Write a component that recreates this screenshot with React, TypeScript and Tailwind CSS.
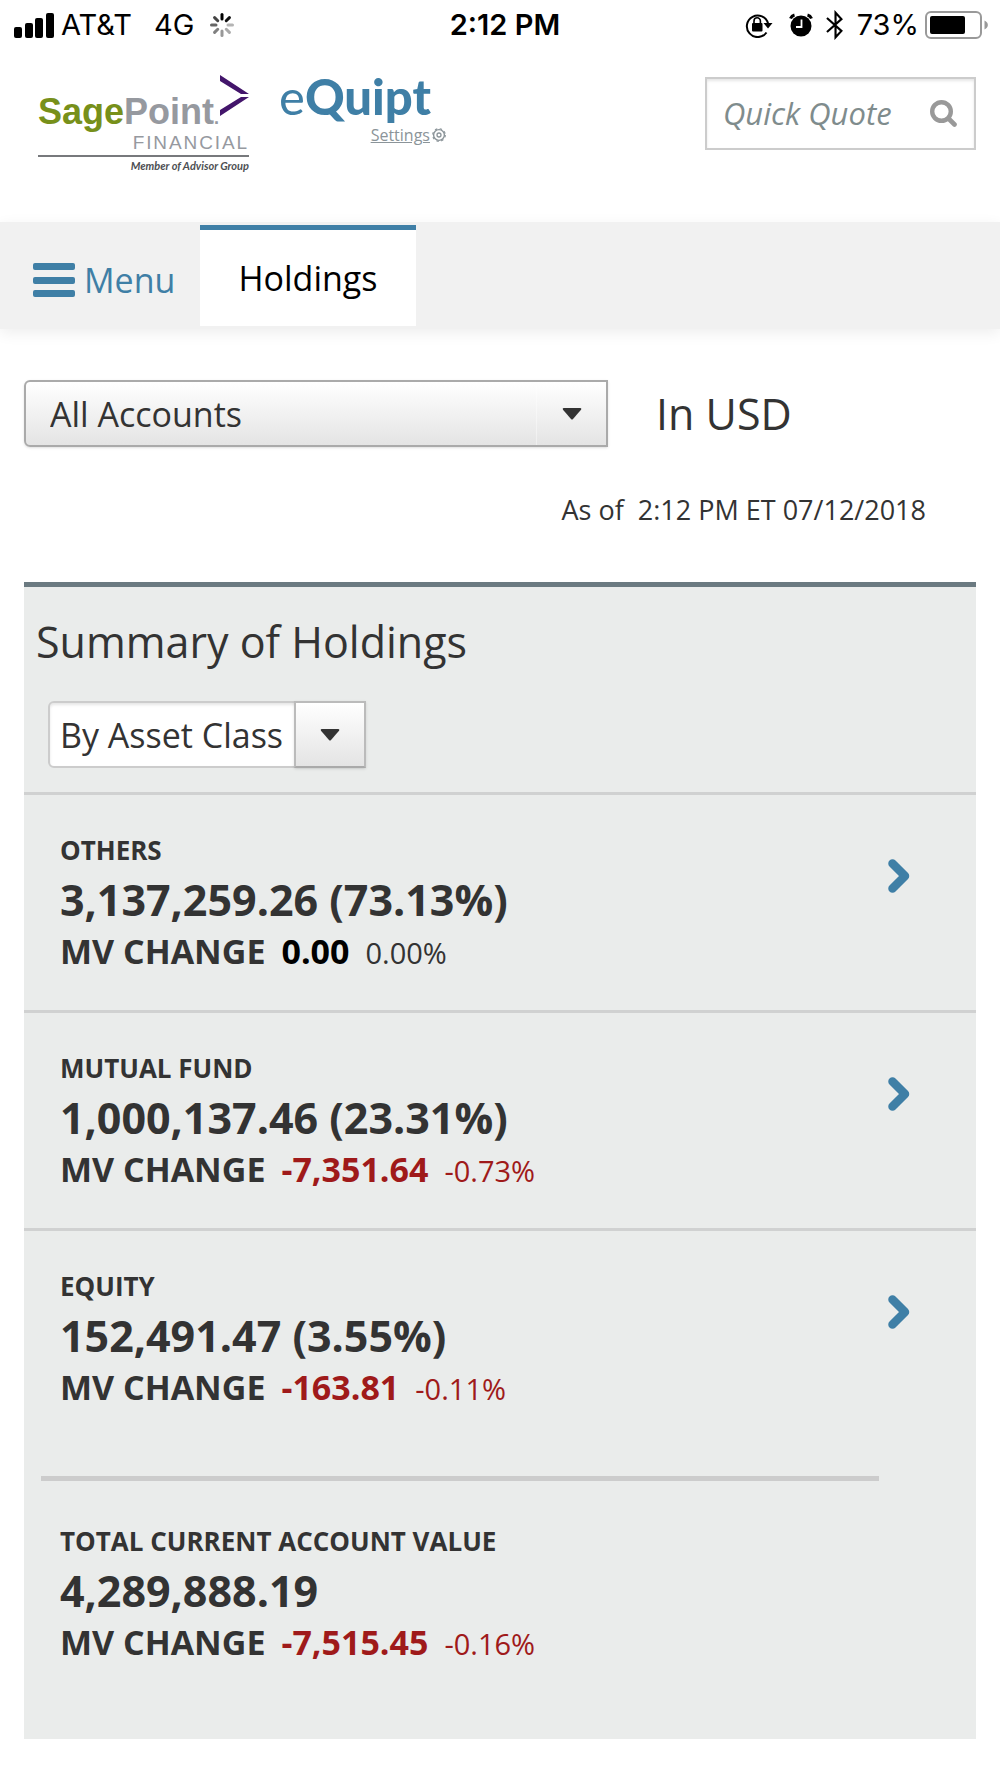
import React, { useState } from "react";

const ASSET_CLASSES = [
  { name: "Others", value: "3,137,259.26 (73.13%)", change: "0.00", percent: "0.00%" },
  { name: "Mutual Fund", value: "1,000,137.46 (23.31%)", change: "-7,351.64", percent: "-0.73%" },
  { name: "Equity", value: "152,491.47 (3.55%)", change: "-163.81", percent: "-0.11%" },
];

const SPINNER_SHADES = ["#000", "#111", "#b4b4b4", "#aaa", "#989898", "#808080", "#666", "#444"];

function StatusBar() {
  return (
    <div className="grid grid-cols-[1fr_auto_1fr] items-center h-[50px] pl-[14px] pr-[12px] font-['Inter',sans-serif] text-[29px] leading-[36px] text-black">
      <div className="flex items-center">
        <svg width="40" height="25" viewBox="0 0 40 25" aria-hidden="true">
          <rect x="0" y="14" width="8" height="11" rx="2" />
          <rect x="11" y="10" width="8" height="15" rx="2" />
          <rect x="21" y="5" width="8" height="20" rx="2" />
          <rect x="32" y="0" width="8" height="25" rx="2" />
        </svg>
        <span className="ml-[7px]">AT&amp;T</span>
        <span className="ml-[22px]">4G</span>
        <svg className="ml-4" width="24" height="24" viewBox="0 0 24 24" aria-hidden="true">
          {SPINNER_SHADES.map((shade, i) => (
            <line
              key={shade}
              x1="12"
              y1="1.5"
              x2="12"
              y2="6"
              stroke={shade}
              strokeWidth="3"
              strokeLinecap="round"
              transform={`rotate(${i * 45} 12 12)`}
            />
          ))}
        </svg>
      </div>
      <span className="pl-2 font-semibold">2:12 PM</span>
      <div className="flex items-center justify-end">
        <svg width="28" height="26" viewBox="0 0 28 26" aria-hidden="true">
          <path d="M21.5 20.5a10.8 10.8 0 1 1 1.6-9" fill="none" stroke="#000" strokeWidth="2" />
          <path d="M18.5 11h9l-4.5 5.5z" />
          <rect x="7" y="11" width="10.5" height="8.5" rx="1" />
          <path d="M9 11.500V9a3.200 3.200 0 0 1 6.400 0v2.500" fill="none" stroke="#000" strokeWidth="1.6" />
        </svg>
        <svg className="ml-4" width="24" height="24" viewBox="0 0 24 24" aria-hidden="true">
          <circle cx="12" cy="13" r="10.500" />
          <path d="M1.500 5.500a6 6 0 0 1 4-3.500M22.500 5.500a6 6 0 0 0-4-3.500" fill="none" stroke="#000" strokeWidth="3" />
          <path d="M12.500 6.500v7.500H7" fill="none" stroke="#fff" strokeWidth="1.800" />
        </svg>
        <svg className="ml-3" width="20" height="30" viewBox="0 0 18 28" aria-hidden="true">
          <path d="M1.500 7.500 15 19.500 9.500 25.500V2.500L15 8.500 1.500 20.500" fill="none" stroke="#000" strokeWidth="2" />
        </svg>
        <span className="ml-3">73%</span>
        <svg className="ml-[6px]" width="63" height="28" viewBox="0 0 63 28" aria-hidden="true">
          <rect x="1" y="1" width="55" height="26" rx="5" fill="#fff" stroke="#999" strokeWidth="2" />
          <rect x="5" y="5" width="35" height="18" rx="2" />
          <path d="M59.500 9.500c4.500 2 4.500 7 0 9z" fill="#999" />
        </svg>
      </div>
    </div>
  );
}

function SagePointLogo() {
  return (
    <div className="w-[211px] font-['Liberation_Sans',sans-serif]">
      <div className="flex">
        <span className="pt-[17px] text-[36px] leading-[40px] font-bold text-[#96999f]">
          <span className="text-[#77901a]">Sage</span>Point<span className="text-[18px] leading-none">.</span>
        </span>
        <svg className="ml-auto shrink-0" width="29" height="42" viewBox="0 0 29 42" aria-hidden="true">
          <path d="M0 0v6l21 13h8zM29 22h-8L0 35v6z" fill="#43156b" />
        </svg>
      </div>
      <div className="border-b-2 border-[#77797c] pt-[2px] pb-[3px] text-right text-[19px] leading-[18px] tracking-widest text-[#96999f]">
        FINANCIAL
      </div>
      <div className="pt-[2px] text-right font-['Lato',sans-serif] text-[11px] leading-[14px] font-bold italic text-[#4d4f53]">
        Member of Advisor Group
      </div>
    </div>
  );
}

function Header() {
  return (
    <header className="flex items-start justify-between h-[172px] pt-[25px] pl-[38px] pr-6">
      <div className="flex">
        <SagePointLogo />
        <div className="ml-[30px]">
          <div className="font-['Lato',sans-serif] text-[49px] leading-[42px] font-black text-[#3f7fa6]">
            <span className="font-normal">e</span>Quipt
          </div>
          <a href="#settings" className="flex items-center justify-end gap-[2px] pt-2 -mr-[15px] text-[16px] leading-[20px] text-[#8b9499]">
            <span className="underline">Settings</span>
            <svg width="14" height="14" viewBox="0 0 14 14" fill="none" stroke="#8b9499" aria-hidden="true">
              <circle cx="7" cy="7" r="5.400" strokeWidth="1.400" />
              <circle cx="7" cy="7" r="6.300" strokeWidth="1.200" strokeDasharray="2.400 2.548" />
              <circle cx="7" cy="7" r="2" strokeWidth="1.300" />
            </svg>
          </a>
        </div>
      </div>
      <form className="flex items-center w-[271px] h-[73px] mt-[2px] pl-4 pr-[17px] border-2 border-[#ccc] bg-white shadow-[inset_0_2px_3px_#0000001a]">
        <input
          type="text"
          aria-label="Quick Quote"
          placeholder="Quick Quote"
          className="min-w-0 flex-1 pb-[2px] text-[31px] leading-[40px] italic outline-none placeholder:text-[#7f8c8d]"
        />
        <button type="button" aria-label="Search">
          <svg width="27" height="27" viewBox="0 0 27 27" fill="none" stroke="#999" aria-hidden="true">
            <circle cx="11.500" cy="11.500" r="9.300" strokeWidth="4.400" />
            <path d="m18.500 18.500 6 6" strokeWidth="4.600" strokeLinecap="round" />
          </svg>
        </button>
      </form>
    </header>
  );
}

function Navigation() {
  return (
    <nav className="flex h-[107px] pt-[3px] pl-[33px] bg-[#f1f1f1] text-[34px] shadow-[0_4px_14px_#00000012]">
      <button type="button" className="flex items-center w-[167px] pt-[6px] text-[#3f7fa6]">
        <svg width="42" height="34" viewBox="0 0 42 34" fill="currentColor" aria-hidden="true">
          <rect width="42" height="7" rx="2" />
          <rect y="14" width="42" height="7" rx="2" />
          <rect y="27" width="42" height="7" rx="2" />
        </svg>
        <span className="ml-[9px]">Menu</span>
      </button>
      <a href="#holdings" aria-current="page" className="flex items-center justify-center w-[216px] h-[101px] border-t-[5px] border-[#3f7fa6] bg-white text-black">
        Holdings
      </a>
    </nav>
  );
}

function Caret() {
  return (
    <svg width="20" height="12" viewBox="0 0 20 12" fill="#333" aria-hidden="true">
      <path d="M1.500 0h17q1.500.6.500 1.800L11 11q-1 1-2 0L1 1.800Q0 .6 1.500 0z" />
    </svg>
  );
}

function Change({ change, percent }: { change: string; percent: string }) {
  const isLoss = change.startsWith("-");
  return (
    <p className="flex items-baseline text-[34px] leading-[40px] font-bold">
      MV CHANGE
      <span className={`ml-4 ${isLoss ? "text-[#9f1a1a]" : "text-black"}`}>{change}</span>
      <span className={`ml-4 text-[29px] leading-none font-normal ${isLoss ? "text-[#9f1a1a]" : ""}`}>{percent}</span>
    </p>
  );
}

function Amounts({ name, value, change, percent }: { name: string; value: string; change: string; percent: string }) {
  return (
    <div>
      <h3 className="text-[26px] leading-[38px] font-bold uppercase">{name}</h3>
      <p className="text-[43px] leading-[62px] font-bold">{value}</p>
      <Change change={change} percent={percent} />
    </div>
  );
}

export default function App() {
  const [account, setAccount] = useState("All Accounts");
  const [grouping, setGrouping] = useState("By Asset Class");

  return (
    <div className="min-h-screen bg-white pb-[39px] font-['Open_Sans',sans-serif] text-[#333]">
      <StatusBar />
      <Header />
      <Navigation />
      <main className="px-6 pt-[51px]">
        <div className="flex items-center">
          <div className="relative w-[584px]">
            <select
              aria-label="Account"
              value={account}
              onChange={(e) => setAccount(e.target.value)}
              className="w-full h-[67px] pl-6 pr-[70px] appearance-none rounded-l-md border-2 border-[#aaa] bg-linear-to-b from-white to-[#e4e4e4] text-[34px] leading-[46px] shadow-sm"
            >
              <option>All Accounts</option>
            </select>
            <span className="absolute inset-y-[2px] right-[2px] flex items-center justify-center w-[70px] border-l border-white/40 pointer-events-none">
              <Caret />
            </span>
          </div>
          <span className="ml-12 text-[43px] leading-[60px]">In USD</span>
        </div>
        <p className="mt-[43px] mr-[50px] text-right text-[27px] leading-[40px] whitespace-pre">As of  2:12 PM ET 07/12/2018</p>

        <section className="mt-[52px] border-t-[5px] border-[#6b7a81] bg-[#eaeceb]">
          <h2 className="pt-[25px] pl-3 text-[43px] leading-[60px]">Summary of Holdings</h2>
          <div className="relative w-[318px] mt-[29px] ml-6 mb-6">
            <select
              aria-label="Group holdings"
              value={grouping}
              onChange={(e) => setGrouping(e.target.value)}
              className="w-full h-[67px] pl-[10px] pr-[70px] appearance-none rounded-l-md border-2 border-[#ccc] bg-white text-[34px] leading-[46px] shadow-[inset_0_2px_3px_#0000001a]"
            >
              <option>By Asset Class</option>
            </select>
            <span className="absolute inset-y-0 right-0 flex items-center justify-center w-[72px] border-2 border-[#bbb] border-b-[#aaa] bg-linear-to-b from-white to-[#e4e4e4] shadow-sm pointer-events-none">
              <Caret />
            </span>
          </div>
          {ASSET_CLASSES.map((item) => (
            <article key={item.name} className="flex items-start justify-between pt-[36px] pb-[39px] pl-9 pr-[66px] border-t-[3px] border-[#d0d1d1]">
              <Amounts {...item} />
              <button type="button" aria-label={`View ${item.name}`} className="mt-7">
                <svg width="22" height="34" viewBox="0 0 22 34" aria-hidden="true">
                  <path d="M4.500 4.500 17 17 4.500 29.500" fill="none" stroke="#3f7fa6" strokeWidth="8.500" strokeLinecap="round" strokeLinejoin="round" />
                </svg>
              </button>
            </article>
          ))}
          <hr className="mt-[30px] ml-[17px] mr-[97px] border-t-[5px] border-[#ccc]" />
          <div className="pt-[41px] pl-9 pb-[77px]">
            <Amounts name="Total Current Account Value" value="4,289,888.19" change="-7,515.45" percent="-0.16%" />
          </div>
        </section>
      </main>
    </div>
  );
}
